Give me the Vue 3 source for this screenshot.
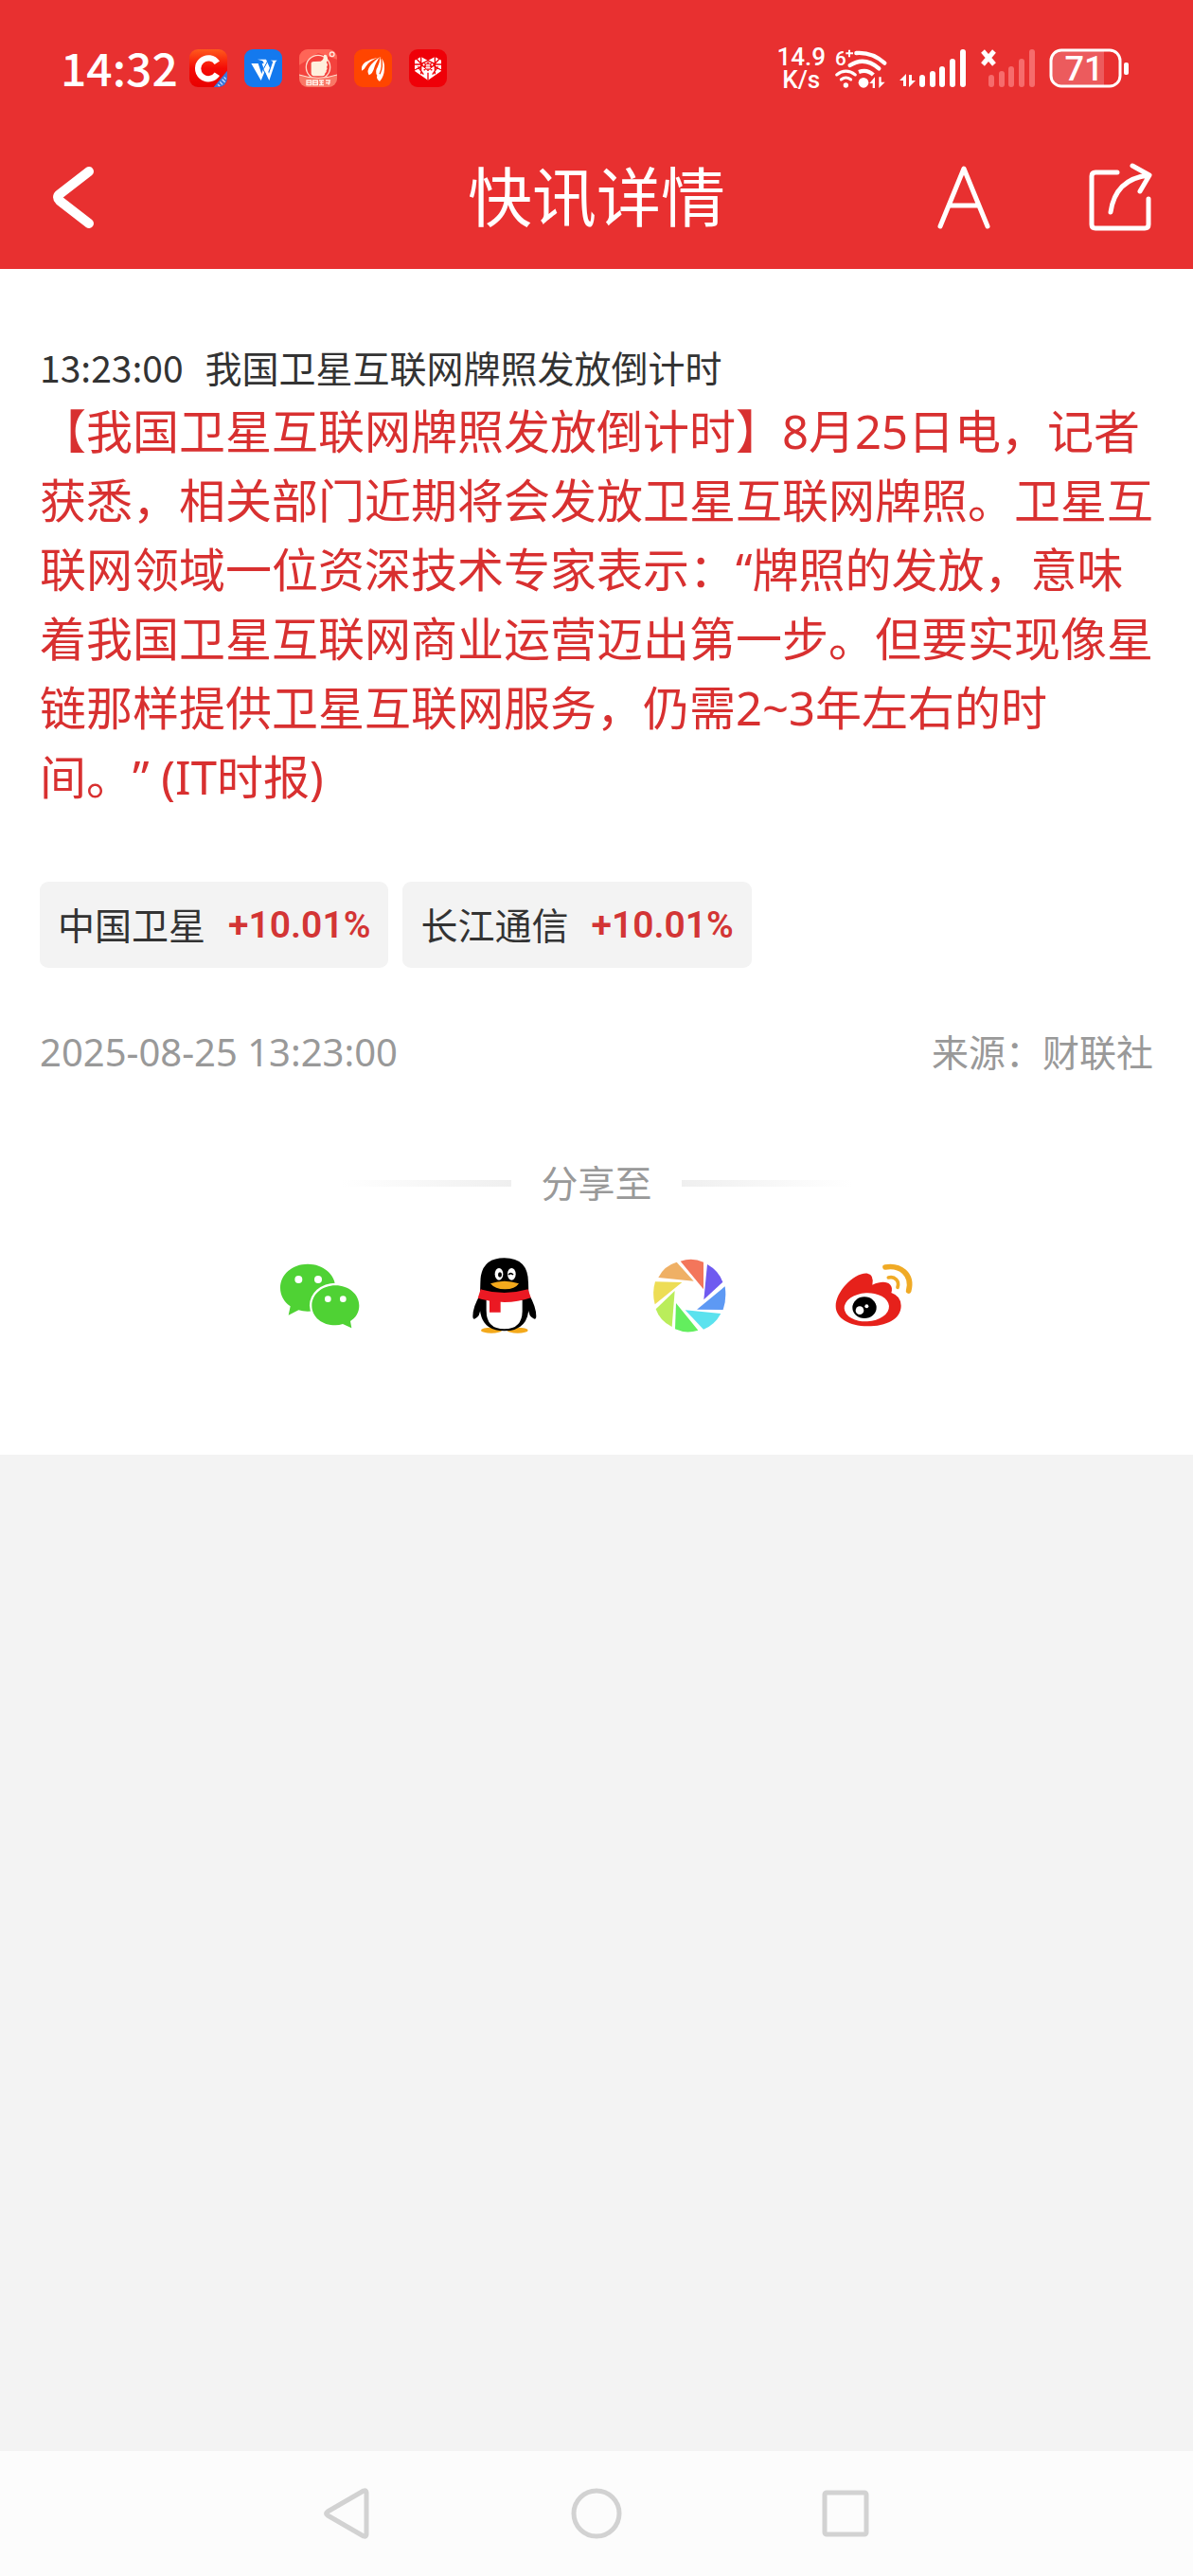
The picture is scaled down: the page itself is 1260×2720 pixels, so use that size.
<script setup>
const news = {
  time: '13:23:00',
  title: '我国卫星互联网牌照发放倒计时',
  body: '【我国卫星互联网牌照发放倒计时】8月25日电，记者获悉，相关部门近期将会发放卫星互联网牌照。卫星互联网领域一位资深技术专家表示：“牌照的发放，意味着我国卫星互联网商业运营迈出第一步。但要实现像星链那样提供卫星互联网服务，仍需2~3年左右的时间。” (IT时报)',
  date: '2025-08-25 13:23:00',
  source: '来源：财联社'
}

const stocks = [
  { name: '中国卫星', change: '+10.01%' },
  { name: '长江通信', change: '+10.01%' }
]

const bars = [
  { x: 0, y: 27 },
  { x: 11, y: 23 },
  { x: 21, y: 18 },
  { x: 32, y: 10 },
  { x: 43, y: 0 }
]
</script>

<template>
  <div class="page">
    <header class="header">
      <div class="status">
        <span class="clock">14:32</span>
        <div class="apps">
          <svg class="app" viewBox="0 0 120 120" aria-hidden="true">
            <defs>
              <linearGradient id="appC" x1="0" y1="0" x2="0" y2="1">
                <stop offset="0" stop-color="#ff5a1c" />
                <stop offset=".5" stop-color="#f50b06" />
                <stop offset="1" stop-color="#e80000" />
              </linearGradient>
              <clipPath id="appClip"><rect width="120" height="120" rx="27" /></clipPath>
            </defs>
            <g clip-path="url(#appClip)">
              <rect width="120" height="120" fill="url(#appC)" />
              <path d="M120 68v52H77z" fill="#3b76d8" />
              <path d="M90 112l7 5M97 103l8 9M104 95l9 9M110 88l6 7" stroke="#c7dcff" stroke-width="4" />
              <path d="M88 43a33 33 0 1 0 0 36" fill="none" stroke="#fff" stroke-width="19" />
            </g>
          </svg>
          <svg class="app" viewBox="0 0 120 120" aria-hidden="true">
            <rect width="120" height="120" rx="27" fill="#1479ee" />
            <path d="M22 45h22l11 33 6-18-5-15h12l10 32 13-38-8-4h21l-5 5-20 59-14-29-12 29z" fill="#fff" />
            <path d="M42 32h27l12 27-5 12-18-34z" fill="#fff" />
            <path d="M49 36l20 49M76 34l-15 28" stroke="#1479ee" stroke-width="3" />
          </svg>
          <svg class="app" viewBox="0 0 120 120" aria-hidden="true">
            <g clip-path="url(#appClip)">
              <rect width="120" height="120" fill="#f4423d" />
              <path d="M0 0h120v32L60 12 0 50z" fill="#ff6557" />
              <circle cx="60" cy="57" r="38" fill="none" stroke="#ffd9c9" stroke-width="4" />
              <path d="M0 81q60 20 120 0v39H0z" fill="#f97866" />
              <path d="M0 81q60 20 120 0" fill="none" stroke="#ffe3d4" stroke-width="3" />
              <path d="M38 48q-2-10 11-9l19-1q10-3 10-19 9-5 12 8 2 8-4 15 7 6 1 14 4 6-1 11 2 6-4 9 0 9-9 9H47q-10-1-9-12z" fill="#fff0dd" />
              <circle cx="104" cy="16" r="7" fill="none" stroke="#ffe8dd" stroke-width="4" />
              <path d="M24 99h14v14H24zM24 106h14M44 99h14v14H44zM44 106h14M63 99h15M65 106h12M63 113h15M70 99v14M84 99h13l-4 14M84 107h14" fill="none" stroke="#fff0e8" stroke-width="4" />
            </g>
          </svg>
          <svg class="app" viewBox="0 0 120 120" aria-hidden="true">
            <rect width="120" height="120" rx="27" fill="#ff4500" />
            <path d="M24 68q-2-18 11-27 17-11 40-15-29 13-35 25-8 14-16 17z" fill="#fff" />
            <path d="M47 82q-8-14 3-28 10-14 31-29-13 19-17 33-5 20-17 24z" fill="#fff" />
            <path d="M81 102q-12-9-8-19-8-12 1-26 7-13 9-33 15 15 13 38-1 24-15 40z" fill="#fff" />
            <path d="M81 79q12-25 4-53" fill="none" stroke="#ff4500" stroke-width="4" />
          </svg>
          <svg class="app" viewBox="0 0 120 120" aria-hidden="true">
            <rect width="120" height="120" rx="27" fill="#ef0008" />
            <path d="M18 35l20-11 22 12 22-12 20 11v34L60 98 18 69z" fill="#fff" />
            <path d="M38 24v55M82 24v55M18 48h26M76 48h26M18 66l24-14 18 13 18-13 24 14M24 31l15 15 21-10 21 10 15-15M60 74v24M47 43l26 24M73 43L47 67M28 55l18 25M92 55L74 80" fill="none" stroke="#ef0008" stroke-width="4" />
            <path d="M60 40l15 15-15 15-15-15z" fill="#ef0008" />
            <path d="M53 51h14M52 58h16M57 46v18M63 46v18" stroke="#fff" stroke-width="3" />
          </svg>
        </div>
        <div class="net">
          <span>14.9</span>
          <span>K/s</span>
        </div>
        <svg class="wifi" viewBox="0 0 165 126" aria-hidden="true">
          <text x="0" y="54" class="gen">6</text>
          <path d="M34 16h23M45 5v23" stroke="#fff" stroke-width="6" />
          <g fill="none" stroke="#fff" stroke-width="13">
            <path d="M67 15q50-4 90 32" stroke-linecap="round" />
            <path d="M47 54q46-30 92 10" stroke-linecap="round" />
            <path d="M75 75q26-10 46 9" />
          </g>
          <g fill="none" stroke="#fff" stroke-width="9" stroke-linecap="round">
            <path d="M5 84q29-23 59 0" />
            <path d="M19 99q15-12 31 0" />
          </g>
          <circle cx="34" cy="117" r="8" fill="#fff" />
          <circle cx="90" cy="109" r="16" fill="#fff" />
          <path d="M109 111l17-20v35h-7v-15zM158 107l-19 19V91h7v16z" fill="#fff" />
        </svg>
        <svg class="signal" viewBox="0 0 70 40" aria-hidden="true">
          <path d="M0 33l7-7v13H4v-6zM17 33l-7 7V27h3v6z" fill="#fff" />
          <rect v-for="b in bars" :key="b.x" :x="b.x + 21" :y="b.y" width="6" :height="40 - b.y" rx="3" fill="#fff" />
        </svg>
        <svg class="nosim" viewBox="0 0 57 40" aria-hidden="true">
          <path d="M2 2l12 14M14 2L2 16" stroke="#fff" stroke-width="5" />
          <rect v-for="b in bars" :key="b.x" :x="b.x + 8" :y="b.y" width="6" :height="40 - b.y" rx="3" fill="#f66c6c" />
        </svg>
        <svg class="battery" viewBox="0 0 86 42" aria-hidden="true">
          <path d="M14 3h44v36H14Q3 39 3 28V14Q3 3 14 3z" fill="#ec5b5d" />
          <rect x="2" y="2" width="73" height="38" rx="11" fill="none" stroke="#fff" stroke-width="3" />
          <rect x="79" y="15" width="5" height="13" rx="2" fill="#fff" />
          <text x="37" y="34" text-anchor="middle" class="level">71</text>
        </svg>
      </div>

      <div class="bar">
        <button class="icon back" type="button" aria-label="返回">
          <svg width="46" height="66" viewBox="0 0 46 66">
            <path d="M40 6L9 30q-4 3 0 7l31 24" fill="none" stroke="#fff" stroke-width="10" stroke-linecap="round" stroke-linejoin="round" />
          </svg>
        </button>
        <h1 class="title">快讯详情</h1>
        <div class="actions">
          <button class="icon" type="button" aria-label="字号">
            <svg width="56" height="68" viewBox="0 0 56 68">
              <path d="M3 65L28 4l25 61M13 43h30" fill="none" stroke="#fff" stroke-width="5" stroke-linecap="round" stroke-linejoin="round" />
            </svg>
          </button>
          <button class="icon" type="button" aria-label="分享">
            <svg width="69" height="74" viewBox="0 0 69 74">
              <g fill="none" stroke="#fff" stroke-width="5" stroke-linecap="round" stroke-linejoin="round">
                <path d="M31 11H8q-4 0-4 4v51q0 4 4 4h52q4 0 4-4V39" />
                <path d="M24 53Q29 18 64 14M47 4l18 10-10 17" />
              </g>
            </svg>
          </button>
        </div>
      </div>
    </header>

    <main class="main">
      <article class="card">
        <p class="headline"><time>{{ news.time }}</time><span>{{ news.title }}</span></p>
        <p class="body">{{ news.body }}</p>
        <div class="stocks">
          <a v-for="s in stocks" :key="s.name" class="stock" href="#">
            <span>{{ s.name }}</span>
            <span class="change">{{ s.change }}</span>
          </a>
        </div>
        <div class="meta">
          <time class="date">{{ news.date }}</time>
          <span>{{ news.source }}</span>
        </div>
        <div class="divider">
          <i class="line left"></i>
          <span>分享至</span>
          <i class="line right"></i>
        </div>
        <div class="share">
          <button class="icon" type="button" aria-label="微信">
            <svg width="86" height="80" viewBox="45 49 258 240">
              <path d="M135 69c49 0 88 33 88 75s-39 75-88 75q-16 0-29-4l-32 16 6-28c-20-14-32-35-32-59 0-42 38-75 87-75z" fill="#4fd234" />
              <ellipse cx="223" cy="200" rx="82" ry="71" fill="#fff" />
              <path d="M223 137c42 0 75 28 75 64 0 21-11 38-28 49l4 22-28-13q-11 4-23 4c-42 0-75-26-75-62s33-64 75-64z" fill="#4fd234" />
              <g fill="#fff">
                <circle cx="106" cy="118" r="12" /><circle cx="168" cy="118" r="12" />
                <circle cx="199" cy="180" r="10" /><circle cx="247" cy="180" r="10" />
              </g>
            </svg>
          </button>
          <button class="icon" type="button" aria-label="QQ">
            <svg width="68" height="80" viewBox="656 50 204 240">
              <ellipse cx="716" cy="280" rx="33" ry="9" fill="#f3a91c" />
              <ellipse cx="799" cy="280" rx="33" ry="9" fill="#f3a91c" />
              <path d="M680 168q-23 38-23 68 0 18 19-3l12-38zM836 168q22 38 22 68 0 18-20-3l-12-38z" fill="#000" />
              <path d="M681 130q0-79 76-79t76 79l2 70q0 82-78 82t-78-82z" fill="#000" />
              <path d="M700 184h114v34q0 58-57 58t-57-58z" fill="#fff" />
              <path d="M682 150q75 22 150 0l9 27q-80 28-168 1z" fill="#eb1923" />
              <path d="M710 184l35 3v36h-35z" fill="#eb1923" />
              <ellipse cx="740" cy="102" rx="13" ry="19" fill="#fff" />
              <ellipse cx="780" cy="102" rx="13" ry="19" fill="#fff" />
              <ellipse cx="743" cy="104" rx="6" ry="8" fill="#000" />
              <path d="M770 104q7-8 15 0" fill="none" stroke="#000" stroke-width="5" />
              <path d="M713 132q44-16 90 0-12 18-44 18t-46-18z" fill="#f3a91c" />
            </svg>
          </button>
          <button class="icon" type="button" aria-label="朋友圈">
            <svg width="78" height="80" viewBox="58 52 234 240">
              <path d="M147 63q37-13 73 3v86z" fill="#f3765b" />
              <path d="M232 73q36 20 49 56l-60 56z" fill="#6f5af0" />
              <path d="M288 143q6 40-6 74l-83-1z" fill="#5d99f4" />
              <path d="M162 218l113 11q-20 37-55 50z" fill="#5be2ee" />
              <path d="M133 196l70 86q-38 12-73-4z" fill="#63ee5e" />
              <path d="M129 157l-9 114q-38-18-51-56z" fill="#baed5b" />
              <path d="M67 128l85 2-86 70q-10-36 1-72z" fill="#eddd55" />
              <path d="M135 66l54 60-112-11q17-37 58-49z" fill="#efb065" />
            </svg>
          </button>
          <button class="icon" type="button" aria-label="微博">
            <svg width="82" height="80" viewBox="638 52 246 240">
              <path d="M640 205c0-44 58-108 101-103q21 4 15 36 40-17 57 0 8 9 3 25 31 11 31 41c0 43-48 65-106 65s-101-25-101-64z" fill="#e6211b" />
              <ellipse cx="738" cy="209" rx="71" ry="45" fill="#fff" transform="rotate(-3 738 209)" />
              <ellipse cx="731" cy="210" rx="38" ry="34" fill="#000" />
              <circle cx="716" cy="219" r="13" fill="#fff" /><circle cx="738" cy="206" r="6" fill="#fff" />
              <path d="M797 82c47-8 88 22 74 75" fill="none" stroke="#f0aa25" stroke-width="17" stroke-linecap="round" />
              <path d="M807 115c20-5 36 10 29 31" fill="none" stroke="#f0aa25" stroke-width="11" stroke-linecap="round" />
            </svg>
          </button>
        </div>
      </article>
    </main>

    <nav class="nav">
      <button class="icon" type="button" aria-label="后退">
        <svg width="54" height="56" viewBox="0 0 54 56">
          <path d="M6 26L44 4q3-1 3 2v44q0 3-3 2L6 30q-3-2 0-4z" fill="none" stroke="#d2d2d2" stroke-width="5" stroke-linejoin="round" />
        </svg>
      </button>
      <button class="icon" type="button" aria-label="主页">
        <svg width="54" height="54" viewBox="0 0 54 54">
          <circle cx="27" cy="27" r="24" fill="none" stroke="#d2d2d2" stroke-width="5" />
        </svg>
      </button>
      <button class="icon" type="button" aria-label="最近任务">
        <svg width="54" height="54" viewBox="0 0 54 54">
          <rect x="5" y="5" width="44" height="44" rx="2" fill="none" stroke="#d2d2d2" stroke-width="5" />
        </svg>
      </button>
    </nav>
  </div>
</template>

<style>
body {
  margin: 0;
  background: #f3f3f3;
}
</style>

<style scoped>
.page {
  display: flex;
  flex-direction: column;
  min-height: 100vh;
  background: #f3f3f3;
  color: #333;
  font-family: "Noto Sans", "Noto Sans CJK SC", sans-serif;
  font-size: 39px;
  text-spacing-trim: space-all;
}
.icon {
  display: flex;
  align-items: center;
  justify-content: center;
  padding: 0;
  border: 0;
  background: none;
  cursor: pointer;
}
svg {
  display: block;
  flex: none;
  overflow: visible;
}
.header {
  background: #e83030;
  color: #fff;
}
.status {
  display: flex;
  align-items: center;
  height: 120px;
  padding: 12px 66px 0 64px;
}
.clock {
  padding-bottom: 4px;
  font-family: "Noto Sans CJK SC", sans-serif;
  font-size: 48px;
  font-weight: 500;
  line-height: 60px;
}
.apps {
  display: flex;
  gap: 18px;
  margin: 0 auto 0 12px;
}
.app {
  width: 40px;
  height: 40px;
}
.net {
  display: flex;
  flex-direction: column;
  align-items: center;
  font-family: Roboto, sans-serif;
  font-size: 26px;
  font-weight: 500;
  line-height: 24px;
}
.wifi {
  width: 55px;
  height: 42px;
  margin-left: 10px;
}
.gen {
  fill: #fff;
  font-family: Roboto, sans-serif;
  font-size: 62px;
  font-weight: 500;
}
.signal {
  width: 70px;
  height: 40px;
  margin-left: 13px;
}
.nosim {
  width: 57px;
  height: 40px;
  margin-left: 16px;
}
.battery {
  width: 86px;
  height: 42px;
  margin-left: 15px;
}
.level {
  fill: #fff;
  font-family: Roboto, sans-serif;
  font-size: 36px;
  font-weight: 500;
}
.bar {
  display: grid;
  grid-template-columns: 1fr auto 1fr;
  align-items: center;
  height: 152px;
  padding: 0 42px;
}
.back {
  justify-self: start;
  margin-left: 12px;
}
.title {
  margin: 0;
  font-size: 68px;
  font-weight: 400;
  line-height: 80px;
}
.actions {
  display: flex;
  align-items: center;
  justify-content: flex-end;
  gap: 103px;
}
.main {
  flex: 1;
}
.card {
  padding: 74px 42px 128px;
  background: #fff;
}
.headline {
  display: flex;
  gap: 23px;
  margin: 0 0 3px;
  font-family: "Noto Sans CJK SC", sans-serif;
  line-height: 58px;
}
.body {
  margin: 0;
  color: #d83030;
  font-size: 49px;
  line-height: 73px;
}
.stocks {
  display: flex;
  gap: 15px;
  margin-top: 74px;
}
.stock {
  display: flex;
  align-items: center;
  gap: 24px;
  height: 91px;
  padding: 0 19px;
  border-radius: 9px;
  background: #f3f3f3;
  color: #333;
  line-height: 58px;
  text-decoration: none;
}
.change {
  color: #d33535;
  font-family: Roboto, sans-serif;
  font-weight: 600;
}
.meta {
  display: flex;
  align-items: center;
  justify-content: space-between;
  margin-top: 60px;
  color: #999;
  line-height: 58px;
}
.date {
  font-size: 40px;
}
.divider {
  display: flex;
  align-items: center;
  justify-content: center;
  gap: 31px;
  margin-top: 80px;
  color: #999;
  line-height: 58px;
}
.line {
  width: 180px;
  height: 7px;
}
.left {
  background: linear-gradient(to left, #efefef, #fff);
}
.right {
  background: linear-gradient(to right, #efefef, #fff);
}
.share {
  display: grid;
  grid-template-columns: repeat(4, 195px);
  justify-content: center;
  margin-top: 50px;
}
.nav {
  display: flex;
  align-items: center;
  justify-content: center;
  gap: 209px;
  height: 132px;
  background: #fcfcfc;
}
</style>
